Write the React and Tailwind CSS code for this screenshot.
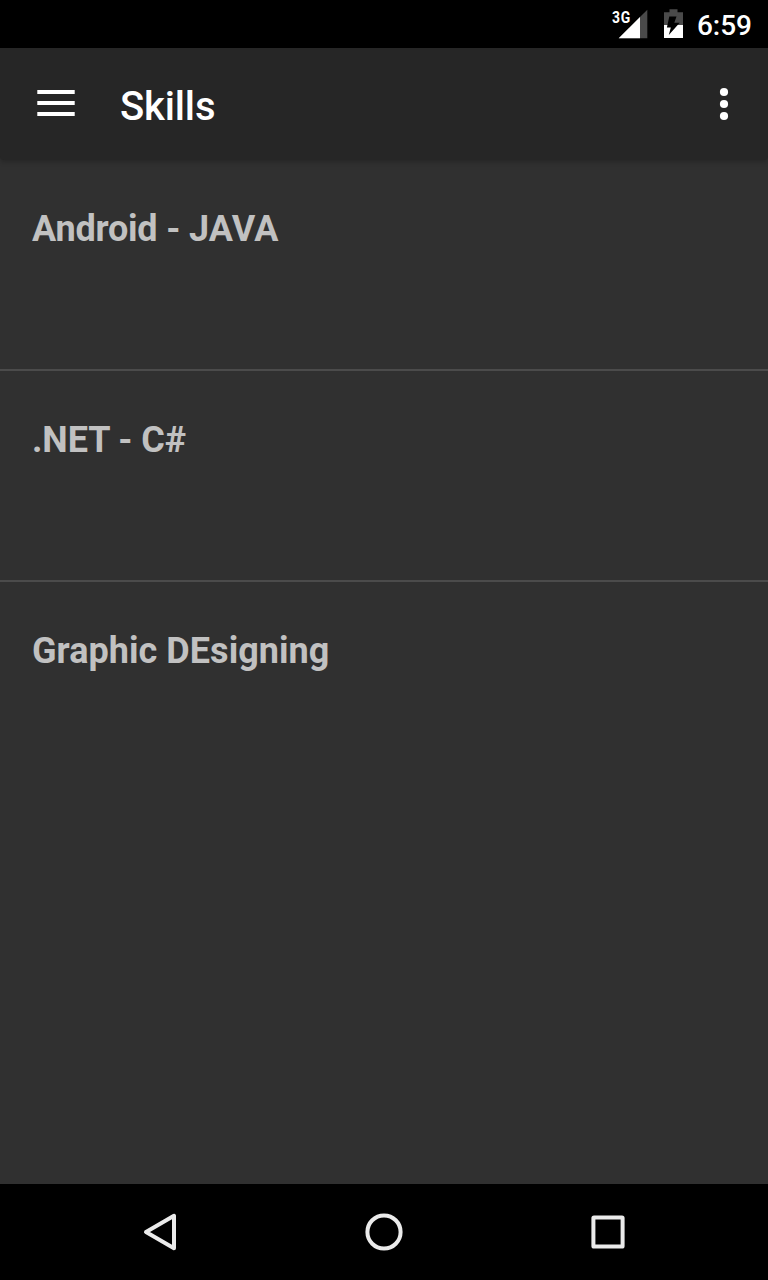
const skills = [
  {
    name: "Android - JAVA",
    tracking: "tracking-[-0.2px]",
    label: (
      <>
        Android - <span className="tracking-[0.2px]">JAVA</span>
      </>
    ),
  },
  { name: ".NET - C#", tracking: "tracking-[-0.1px]" },
  { name: "Graphic DEsigning", tracking: "tracking-[0.04px]" },
];

function StatusBar() {
  return (
    <div className="flex h-12 shrink-0 items-center justify-end bg-black pr-4 text-white">
      <svg className="mr-px h-12 w-[84px]" viewBox="612 0 84 48">
        <path d="M647.3 9.7V38.3H618.7Z" fill="#4a4a4a" />
        <path d="M640 17V38.3H618.7Z" fill="#fff" />
        <text transform="translate(612.1 22.7) scale(0.83 1)" fontSize="16.8" fontWeight="700" fill="#fff" letterSpacing="0.7">
          3G
        </text>
        <path d="M664 12.3h5.5V9.2h8v3.1h5.5V25h-19Z" fill="#4a4a4a" />
        <path d="M664 25h19v13h-19Z" fill="#fff" />
        <path d="M669.3 16.5h7.2l-2.2 6.2h5.4L668.8 35l2-7.4h-3.9Z" fill="#000" />
      </svg>
      <span className="pt-[3px] text-[28px] leading-[33px] font-medium">6:59</span>
    </div>
  );
}

function AppBar() {
  return (
    <header className="z-10 flex h-28 shrink-0 items-center rounded-b-[4px] bg-[#262626] shadow-[0_2px_5px_rgba(0,0,0,0.22)]">
      <button className="ml-8 h-12 w-12" aria-label="Menu">
        <svg viewBox="0 0 48 48" fill="#fff">
          <path d="M5.3 10h37.4v4H5.3zM5.3 21h37.4v4H5.3zM5.3 32h37.4v4H5.3z" />
        </svg>
      </button>
      <h1 className="ml-10 pt-1.5 text-[40px] leading-[48px] font-medium tracking-[-0.15px] text-white">Skills</h1>
      <button className="mr-5 ml-auto h-12 w-12" aria-label="More options">
        <svg viewBox="0 0 48 48" fill="#fff">
          <circle cx="24" cy="12" r="4.1" />
          <circle cx="24" cy="24" r="4.1" />
          <circle cx="24" cy="36" r="4.1" />
        </svg>
      </button>
    </header>
  );
}

function NavBar() {
  return (
    <nav className="flex h-24 shrink-0 items-center justify-center gap-32 bg-black">
      <svg className="size-24" viewBox="0 0 96 96" fill="none" stroke="#ebebeb" strokeWidth="4" strokeLinejoin="round">
        <path d="M62 31.8V64.2L34 48Z" />
      </svg>
      <svg className="size-24" viewBox="0 0 96 96" fill="none" stroke="#ebebeb" strokeWidth="4">
        <circle cx="48" cy="48" r="16.6" />
      </svg>
      <svg className="size-24" viewBox="0 0 96 96" fill="none" stroke="#ebebeb" strokeWidth="4" strokeLinejoin="round">
        <rect x="33.4" y="33.4" width="29.2" height="29.2" rx="0.6" />
      </svg>
    </nav>
  );
}

export default function App() {
  return (
    <div className="flex h-screen w-full flex-col bg-[#303030] font-['Roboto',sans-serif]">
      <StatusBar />
      <AppBar />
      <ul className="flex-1 divide-y-2 divide-[#4b4b4b]">
        {skills.map(({ name, tracking, label }) => (
          <li key={name} className="box-content h-[209px]">
            <h2 className={`px-8 pt-12 text-[36px] leading-[42px] font-bold text-[#c1c1c1] ${tracking}`}>
              {label ?? name}
            </h2>
          </li>
        ))}
      </ul>
      <NavBar />
    </div>
  );
}
